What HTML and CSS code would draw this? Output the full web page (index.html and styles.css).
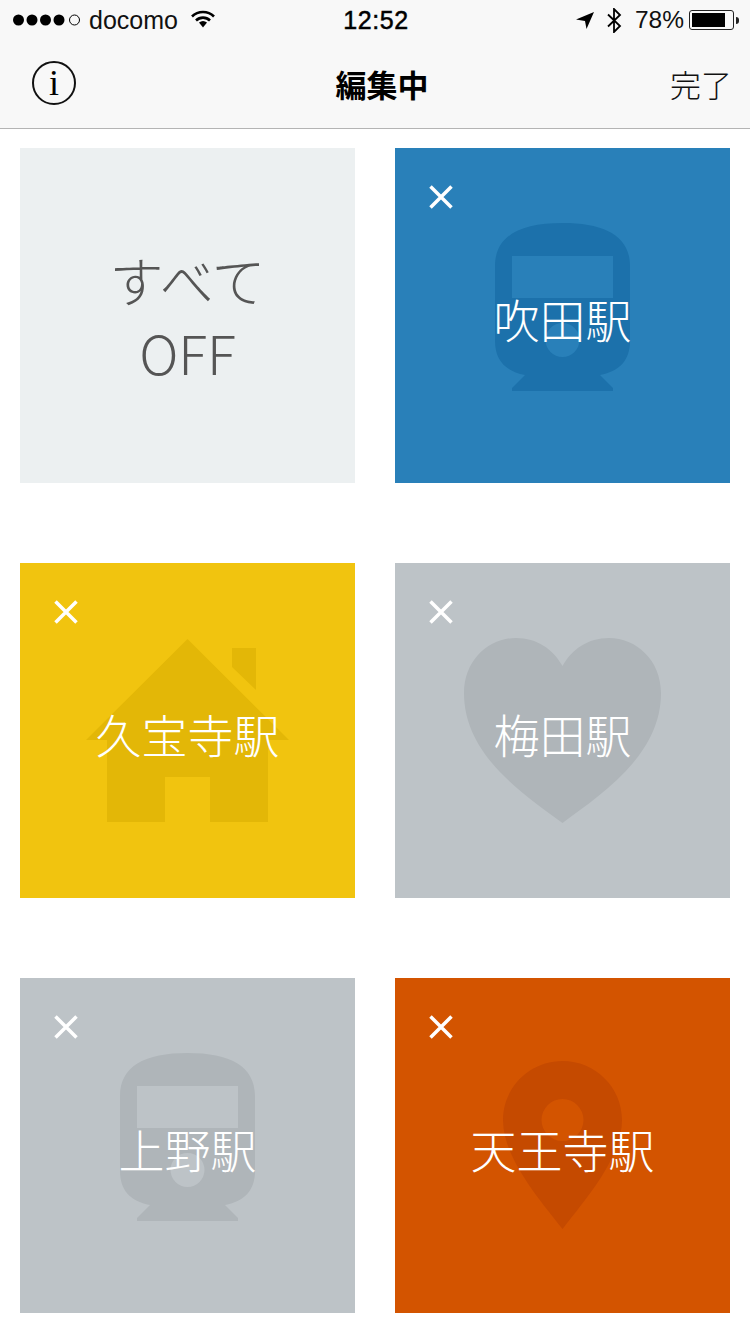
FILE: index.html
```html
<!DOCTYPE html>
<html lang="ja">
<head>
<meta charset="utf-8">
<title>編集中</title>
<link rel="stylesheet" href="styles.css">
</head>
<body>
<header class="top">
  <div class="status">
    <div class="status-left">
      <svg class="signal" width="68" height="14" viewBox="0 0 68 14"><circle cx="5.5" cy="7" r="5.5"/><circle cx="19" cy="7" r="5.5"/><circle cx="32.500" cy="7" r="5.5"/><circle cx="46" cy="7" r="5.5"/><circle cx="61.500" cy="7" r="5" fill="none" stroke="#000" stroke-width="1"/></svg>
      <span class="carrier">docomo</span>
      <svg class="wifi" width="24" height="18" viewBox="0 0 24 18"><path d="M1 6.500C7 .5 17 .5 23 6.500" fill="none" stroke="#000" stroke-width="2.600"/><path d="M5 10.500C9 6.600 15 6.600 19 10.500" fill="none" stroke="#000" stroke-width="2.600"/><path d="M8 12.500C10.500 10.500 13.500 10.500 16 12.500L12 17.500Z"/></svg>
    </div>
    <div class="time">12:52</div>
    <div class="status-right">
      <svg class="loc" width="18" height="17" viewBox="0 0 18 17"><path d="M18 0L10.500 17L9 9L0 7.500Z"/></svg>
      <svg class="bt" width="16" height="25" viewBox="0 0 16 25"><path d="M2 6.500L14 18L8 24V1L14 7L2 18.500" fill="none" stroke="#000" stroke-width="1.800"/></svg>
      <span class="pct">78%</span>
      <div class="battery"><div class="battery-fill"></div></div>
      <div class="nub"></div>
    </div>
  </div>
  <nav class="nav">
    <div class="info">i</div>
    <div class="title">編集中</div>
    <div class="done">完了</div>
  </nav>
</header>
<main class="grid">
  <div class="tile off"><span>すべて<br>OFF</span></div>

  <div class="tile blue">
    <svg class="bg" viewBox="0 0 335 335"><path fill-rule="evenodd" d="M100 118C100 88 125 75 167.500 75C210 75 235 88 235 118V193C235 212 225 223 205 227L218 240V243H117V240L130 227C110 223 100 212 100 193ZM117 108V150H218V108ZM167.500 175A17 17 0 1 0 167.500 209A17 17 0 1 0 167.500 175Z"/></svg>
    <svg class="close" viewBox="0 0 24 24"><path d="M1.500 1.500L22.500 22.500M22.500 1.500L1.500 22.500"/></svg>
    <span class="name">吹田駅</span>
  </div>

  <div class="tile yellow">
    <svg class="bg" viewBox="0 0 335 335"><path d="M167.500 76L269 177H248V259H190V214H145V259H87V177H66ZM212 85H236V127L212 104Z"/></svg>
    <svg class="close" viewBox="0 0 24 24"><path d="M1.500 1.500L22.500 22.500M22.500 1.500L1.500 22.500"/></svg>
    <span class="name">久宝寺駅</span>
  </div>

  <div class="tile gray">
    <svg class="bg" viewBox="0 0 335 335"><path d="M167.500 260C130 232 69 193 69 130C69 97 94 75 121 75C142 75 158 86 167.500 103C177 86 193 75 214 75C241 75 266 97 266 130C266 193 205 232 167.500 260Z"/></svg>
    <svg class="close" viewBox="0 0 24 24"><path d="M1.500 1.500L22.500 22.500M22.500 1.500L1.500 22.500"/></svg>
    <span class="name">梅田駅</span>
  </div>

  <div class="tile gray">
    <svg class="bg" viewBox="0 0 335 335"><path fill-rule="evenodd" d="M100 118C100 88 125 75 167.500 75C210 75 235 88 235 118V193C235 212 225 223 205 227L218 240V243H117V240L130 227C110 223 100 212 100 193ZM117 108V150H218V108ZM167.500 175A17 17 0 1 0 167.500 209A17 17 0 1 0 167.500 175Z"/></svg>
    <svg class="close" viewBox="0 0 24 24"><path d="M1.500 1.500L22.500 22.500M22.500 1.500L1.500 22.500"/></svg>
    <span class="name">上野駅</span>
  </div>

  <div class="tile orange">
    <svg class="bg" viewBox="0 0 335 335"><path fill-rule="evenodd" d="M167.500 251C145 222 108 180 108 142C108 109 135 83 167.500 83C200 83 227 109 227 142C227 180 190 222 167.500 251ZM167.500 121A21 21 0 1 0 167.500 163A21 21 0 1 0 167.500 121Z"/></svg>
    <svg class="close" viewBox="0 0 24 24"><path d="M1.500 1.500L22.500 22.500M22.500 1.500L1.500 22.500"/></svg>
    <span class="name">天王寺駅</span>
  </div>
</main>
</body>
</html>
```
FILE: styles.css
```css
* { box-sizing: border-box; }
html, body { margin: 0; padding: 0; }
body {
  width: 750px;
  height: 1334px;
  overflow: hidden;
  background: #fff;
  font-family: "Noto Sans CJK JP", "Liberation Sans", sans-serif;
  color: #000;
}
.top {
  height: 129px;
  background: #f8f8f8;
  border-bottom: 1px solid #b4b4b4;
  display: flex;
  flex-direction: column;
}
.status {
  height: 40px;
  display: grid;
  grid-template-columns: 1fr auto 1fr;
  align-items: center;
  padding: 0 11px 0 13px;
  font-family: "Liberation Sans", sans-serif;
  font-size: 25px;
}
.status-left { display: flex; align-items: center; }
.signal { display: block; }
.carrier { margin-left: 8px; letter-spacing: 0; color: #111; }
.wifi { margin-left: 13px; margin-top: -2px; display: block; }
.time { font-weight: 400; font-size: 25px; letter-spacing: 0.6px; -webkit-text-stroke: 0.5px #000; }
.status-right { display: flex; align-items: center; justify-content: flex-end; }
.loc { display: block; margin-top: 1px; }
.bt { display: block; margin-left: 12px; }
.pct { margin-left: 13px; font-size: 24.500px; color: #111; }
.battery {
  width: 45px;
  height: 20px;
  margin-left: 5px;
  border: 1.500px solid #222;
  border-radius: 3px;
  padding: 2px;
}
.battery-fill { width: 33px; height: 100%; background: #000; }
.nub { width: 3px; height: 7px; margin-left: 2px; background: #222; border-radius: 0 3px 3px 0; }
.nav {
  flex: 1;
  display: grid;
  grid-template-columns: 1fr auto 1fr;
  align-items: center;
  padding: 0 18px 2px 32px;
}
.info {
  width: 44px;
  height: 44px;
  border: 2px solid #111;
  border-radius: 50%;
  display: flex;
  align-items: center;
  justify-content: center;
  font-family: "Liberation Serif", serif;
  font-size: 36px;
  line-height: 1;
}
.title { font-size: 31px; font-weight: 700; line-height: 1; }
.done { justify-self: end; font-size: 31px; font-weight: 300; line-height: 1; color: #111; }
.grid {
  display: grid;
  grid-template-columns: 335px 335px;
  grid-auto-rows: 335px;
  column-gap: 40px;
  row-gap: 80px;
  padding: 19px 20px 0;
}
.tile {
  position: relative;
  display: flex;
  align-items: center;
  justify-content: center;
  color: #fff;
}
.bg { position: absolute; left: 0; top: 0; width: 335px; height: 335px; }
.close {
  position: absolute;
  left: 34px;
  top: 37px;
  width: 24px;
  height: 24px;
  fill: none;
  stroke: #fff;
  stroke-width: 3.500;
}
.name {
  position: relative;
  font-size: 46px;
  font-weight: 300;
  line-height: 1;
  margin-top: 5px;
}
.off { background: #ecf0f1; color: #555; text-align: center; font-size: 54px; font-weight: 300; line-height: 72px; }
.blue { background: #2980b9; }
.blue .bg { fill: #1c71ab; }
.yellow { background: #f1c40f; }
.yellow .bg { fill: #e3b707; }
.gray { background: #bdc3c7; }
.gray .bg { fill: #afb5b9; }
.orange { background: #d35400; }
.orange .bg { fill: #c54a00; }
```
